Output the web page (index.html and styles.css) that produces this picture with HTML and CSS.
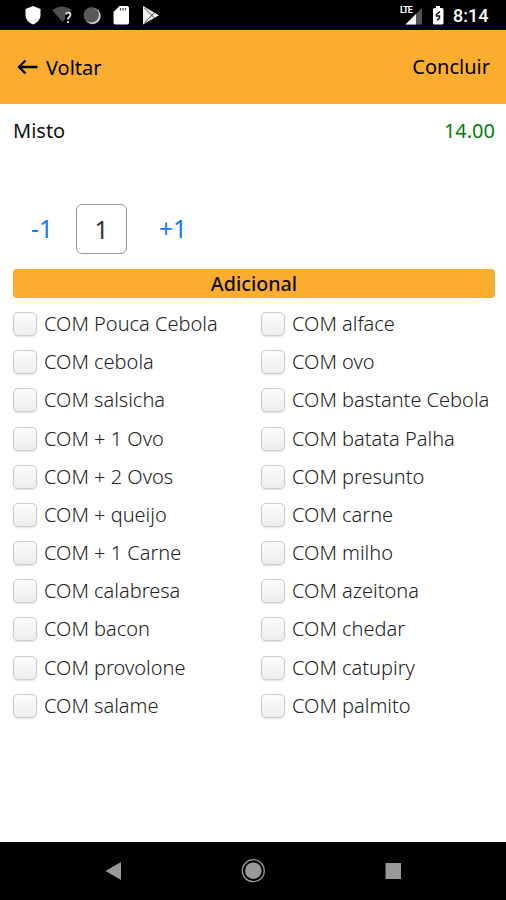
FILE: index.html
```html
<!DOCTYPE html>
<html lang="pt-BR">
<head>
<meta charset="utf-8">
<title>Misto</title>
<link rel="stylesheet" href="styles.css">
</head>
<body>
<div class="status">
  <svg width="150" height="30" viewBox="15 0 150 30">
    <path d="M33 6L40.500 9V15C40.500 19.500 37 23 33 24.500C29 23 25.500 19.500 25.500 15V9Z" fill="#fff"/>
    <path d="M52 10Q62 3 72 10L70 12Q65 11 65 16V19L62.500 22Z" fill="#505050"/>
    <path d="M66 14.500Q66 12.500 68.300 12.500T70.500 15Q70.500 16.200 69 17.200T68 19.500M68 21V23" fill="none" stroke="#eee" stroke-width="1.700"/>
    <circle cx="92.500" cy="16" r="8.200" fill="#ccc"/>
    <circle cx="91.300" cy="14.800" r="7.600" fill="#585858"/>
    <path d="M119.500 6H127Q129 6 129 8V22.500Q129 24.500 127 24.500H115.500Q113.500 24.500 113.500 22.500V12Z" fill="#fff"/>
    <path d="M120.500 8V10.500M123 8V10.500M125.500 8V10.500" stroke="#555" stroke-width="1.300"/>
    <path d="M143 6L159 15.300L143 24.500Z" fill="#eee"/>
    <path d="M144.500 8L155 18.500M144.500 23L155 12" stroke="#444" stroke-width="1"/>
  </svg>
  <div class="status-right">
    <span class="lte">LTE</span>
    <svg width="50" height="30" viewBox="400 0 50 30">
      <path d="M422 8V24.500H405.500Z" fill="#555"/>
      <path d="M416 14V24.500H405.500Z" fill="#fff"/>
      <path d="M436 6H440V8H442Q443.500 8 443.500 9.500V23Q443.500 24.500 442 24.500H434.500Q433 24.500 433 23V9.500Q433 8 434.500 8H436Z" fill="#fff"/>
      <path d="M440 11.500L436.500 14.500V16H439.500V18L437 20.500" fill="none" stroke="#111" stroke-width="1.500"/>
    </svg>
    <span class="clock">8:14</span>
  </div>
</div>
<header class="bar">
  <a class="back">
    <svg width="22" height="18" viewBox="0 0 22 18"><path d="M20.500 9H2M8.500 2.500L2 9L8.500 15.500" fill="none" stroke="#000" stroke-width="2.300"/></svg>
    <span class="back-text">Voltar</span>
  </a>
  <a class="done">Concluir</a>
</header>
<main class="content">
  <div class="product"><span>Misto</span><span class="price">14.00</span></div>
  <div class="stepper"><span class="minus">-1</span><span class="qty">1</span><span class="plus">+1</span></div>
  <h2 class="section">Adicional</h2>
  <div class="options">
    <div class="option"><i class="box"></i><span>COM Pouca Cebola</span></div>
    <div class="option"><i class="box"></i><span>COM alface</span></div>
    <div class="option"><i class="box"></i><span>COM cebola</span></div>
    <div class="option"><i class="box"></i><span>COM ovo</span></div>
    <div class="option"><i class="box"></i><span>COM salsicha</span></div>
    <div class="option"><i class="box"></i><span>COM bastante Cebola</span></div>
    <div class="option"><i class="box"></i><span>COM + 1 Ovo</span></div>
    <div class="option"><i class="box"></i><span>COM batata Palha</span></div>
    <div class="option"><i class="box"></i><span>COM + 2 Ovos</span></div>
    <div class="option"><i class="box"></i><span>COM presunto</span></div>
    <div class="option"><i class="box"></i><span>COM + queijo</span></div>
    <div class="option"><i class="box"></i><span>COM carne</span></div>
    <div class="option"><i class="box"></i><span>COM + 1 Carne</span></div>
    <div class="option"><i class="box"></i><span>COM milho</span></div>
    <div class="option"><i class="box"></i><span>COM calabresa</span></div>
    <div class="option"><i class="box"></i><span>COM azeitona</span></div>
    <div class="option"><i class="box"></i><span>COM bacon</span></div>
    <div class="option"><i class="box"></i><span>COM chedar</span></div>
    <div class="option"><i class="box"></i><span>COM provolone</span></div>
    <div class="option"><i class="box"></i><span>COM catupiry</span></div>
    <div class="option"><i class="box"></i><span>COM salame</span></div>
    <div class="option"><i class="box"></i><span>COM palmito</span></div>
  </div>
</main>
<nav class="nav">
  <svg width="506" height="58" viewBox="0 842 506 58">
    <path d="M105.500 871L121 862V880Z" fill="#999"/>
    <circle cx="253.300" cy="870.700" r="11" fill="none" stroke="#999" stroke-width="1.300"/>
    <circle cx="253.300" cy="870.700" r="8.300" fill="#999"/>
    <path d="M385.500 863H401V879H385.500Z" fill="#999"/>
  </svg>
</nav>
</body>
</html>
```
FILE: styles.css
```css
* { box-sizing: border-box; }
body {
  margin: 0;
  width: 506px;
  height: 900px;
  display: flex;
  flex-direction: column;
  overflow: hidden;
  background: #fff;
  color: #111;
  font-family: "Noto Sans", "Open Sans", sans-serif;
  font-size: 20px;
  line-height: 26px;
}
.status {
  height: 30px;
  padding: 0 15px;
  display: flex;
  justify-content: space-between;
  background: #000;
  color: #fff;
}
.status-right { position: relative; display: flex; width: 91px; }
.status svg { display: block; flex: none; }
.lte {
  position: absolute;
  left: 0;
  top: 5px;
  font: 700 9px/10px Roboto, sans-serif;
  letter-spacing: -0.900px;
}
.clock { font: 500 18px/32px Roboto, sans-serif; margin-left: 3px; }
.bar {
  height: 74px;
  padding: 0 16px 0 17px;
  display: flex;
  align-items: center;
  justify-content: space-between;
  background: #fbad30;
  color: #000;
}
.back { display: flex; align-items: center; gap: 7px; }
.back svg { margin-top: -1px; }
.back-text { padding-top: 2px; }
.content { flex: 1; padding: 14px 11px 0 13px; }
.product { display: flex; justify-content: space-between; }
.price { color: #087a0c; }
.stepper {
  height: 50px;
  margin-top: 60px;
  padding-left: 18px;
  display: flex;
  align-items: center;
  font-size: 24.500px;
  color: #0a7df5;
}
.minus { width: 45px; }
.qty {
  width: 51px;
  height: 50px;
  border: 1.500px solid #999;
  border-radius: 6px;
  text-align: center;
  line-height: 49px;
  color: #333;
}
.plus { margin-left: 32px; }
.section {
  height: 29px;
  margin: 15px 0 7px;
  border-radius: 4px;
  background: #fbad30;
  font-size: 19.700px;
  font-weight: 500;
  line-height: 29px;
  text-align: center;
  color: #111;
}
.options {
  display: grid;
  grid-template-columns: 248px 1fr;
  grid-auto-rows: 38.180px;
}
.option {
  display: flex;
  align-items: center;
  gap: 7px;
  white-space: nowrap;
  font-weight: 300;
  color: #222;
}
.box {
  flex: none;
  width: 24px;
  height: 24px;
  border: 1.500px solid #ccc;
  border-radius: 5px;
  background: linear-gradient(#fcfcfc, #ededed);
  box-shadow: 0 1px 2px rgba(0, 0, 0, 0.12);
}
.nav { height: 58px; background: #000; }
.nav svg { display: block; }
```
